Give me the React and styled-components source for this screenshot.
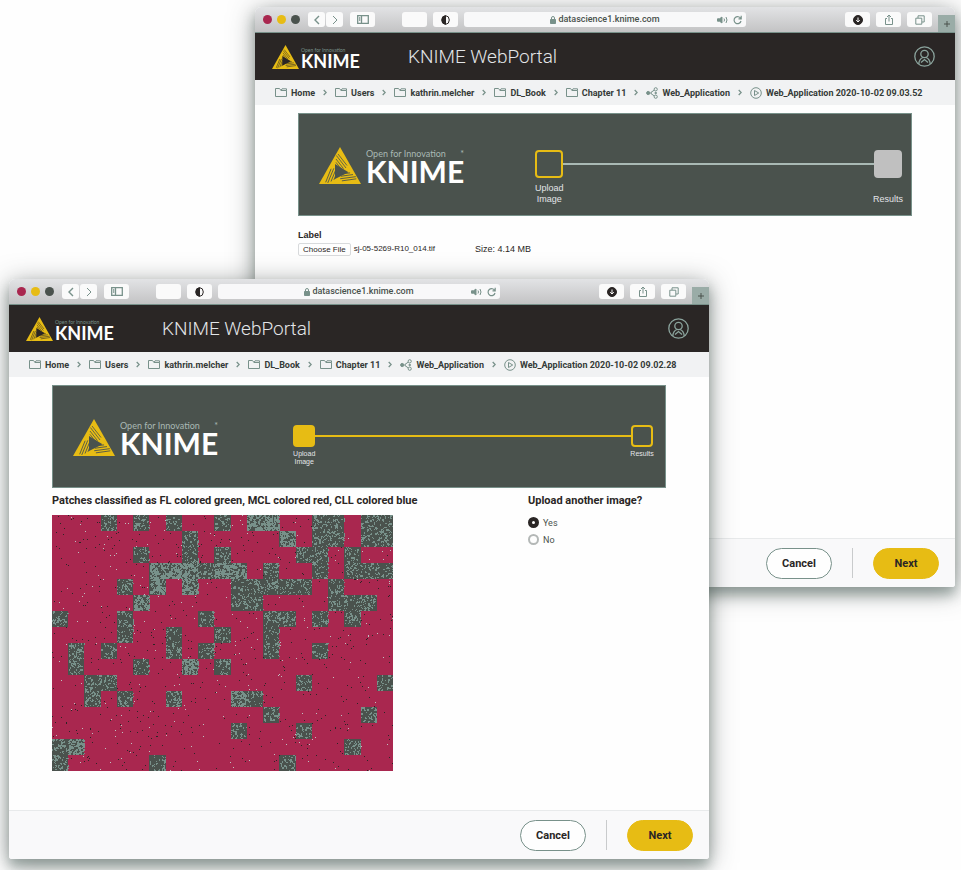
import React from "react";
import styled, { createGlobalStyle } from "styled-components";

const color = {
  ink: "#2a2625",
  slate: "#4a524d",
  sage: "#78918a",
  yellow: "#e7bc14",
  crimson: "#a9274f",
  grey: "#c0c0c0",
  mist: "#e3e5e8",
};

const GlobalStyle = createGlobalStyle`
  *, *::before, *::after { box-sizing: border-box; }
  body {
    margin: 0;
    background: #fefefe;
    color: ${color.ink};
    font-family: Roboto, "Liberation Sans", sans-serif;
  }
  button, input { font: inherit; color: inherit; margin: 0; }
  svg { display: block; flex: none; }
`;

const Desktop = styled.main`
  position: relative;
  min-height: 100vh;
  overflow: hidden;
`;

const Window = styled.section`
  position: absolute;
  top: ${(p) => (p.$front ? "279px" : "7px")};
  left: ${(p) => (p.$front ? "9px" : "255px")};
  right: ${(p) => (p.$front ? "252px" : "6px")};
  min-height: 580px;
  display: flex;
  flex-direction: column;
  background: #fefefe;
  border-radius: 6px 6px 3px 3px;
  box-shadow: 0 8px 12px rgba(74, 100, 92, 0.4), 0 4px 26px rgba(60, 66, 64, 0.5);
`;

/* Browser chrome */
const Toolbar = styled.div`
  display: flex;
  align-items: center;
  height: 26px;
  padding-left: 8px;
  border-radius: 6px 6px 0 0;
  border-bottom: 1px solid ${color.sage};
  background: linear-gradient(#e2e3e5, #c3c3c4);
  color: ${color.sage};
`;

const Lights = styled.div`
  display: flex;
  gap: 5px;
  margin-right: 8px;
`;

const Light = styled.span`
  width: 9px;
  height: 9px;
  border-radius: 50%;
  background: ${(p) => p.$tone};
`;

const ToolButton = styled.button`
  display: grid;
  place-items: center;
  width: ${(p) => (p.$narrow ? "17px" : "25px")};
  height: 15px;
  padding: 0;
  border: 0;
  border-radius: 3px;
  background: #fafafa;
  color: ${(p) => (p.$dark ? color.ink : color.sage)};
`;

const NavPair = styled.div`
  display: flex;
  gap: 1px;
  margin-right: 7px;
`;

const ToolGroup = styled.div`
  display: flex;
  gap: 6px;
  margin-left: ${(p) => (p.$end ? "99px" : "27px")};
  margin-right: 6px;
`;

const Address = styled.div`
  flex: 1;
  display: grid;
  grid-template-columns: 1fr auto 1fr;
  align-items: center;
  height: 15px;
  padding: 0 4px;
  border-radius: 3px;
  background: #f8f8f9;
  color: ${color.slate};
  font-size: 9px;
  font-weight: 500;
  line-height: 15px;
`;

const AddressText = styled.span`
  grid-column: 2;
  display: flex;
  align-items: center;
  gap: 2px;
  svg { color: ${color.sage}; }
`;

const AddressTools = styled.span`
  justify-self: end;
  display: flex;
  align-items: center;
  gap: 4px;
  color: ${color.sage};
`;

const NewTab = styled.button`
  align-self: flex-end;
  display: grid;
  place-items: center;
  width: 17px;
  height: 17px;
  padding: 0;
  border: 0;
  background: #9aaca7;
  color: ${color.slate};
`;

/* Portal header */
const Header = styled.header`
  display: flex;
  align-items: center;
  height: 47px;
  padding: 0 20px 0 17px;
  background: ${color.ink};
`;

const Brand = styled.div`
  display: flex;
  align-items: flex-end;
  gap: ${(p) => (p.$large ? "5px" : "2px")};
`;

const BrandWords = styled.div`
  display: flex;
  flex-direction: column;
  font-family: Lato, sans-serif;
`;

const Tagline = styled.span`
  display: flex;
  justify-content: space-between;
  color: ${(p) => (p.$large ? "#a9b9b4" : color.sage)};
  font-size: ${(p) => (p.$large ? "9px" : "5px")};
  line-height: ${(p) => (p.$large ? "9px" : "6px")};
`;

const BrandName = styled.span`
  color: #fefefe;
  font-size: ${(p) => (p.$large ? "30px" : "18px")};
  font-weight: 700;
  line-height: ${(p) => (p.$large ? "26px" : "16px")};
`;

const PortalTitle = styled.h1`
  flex: 1;
  margin: 0 0 0 48px;
  color: ${color.mist};
  font-size: 19px;
  font-weight: 300;
  line-height: 24px;
`;

const UserButton = styled.button`
  padding: 0;
  border: 0;
  background: none;
  color: #8ba49d;
`;

/* Breadcrumb */
const Crumbs = styled.nav`
  display: flex;
  align-items: center;
  gap: 8px;
  height: 25px;
  padding-left: 20px;
  background: #f1f2f3;
  color: ${color.sage};
  white-space: nowrap;
`;

const Crumb = styled.a`
  display: flex;
  align-items: center;
  gap: 4px;
  color: ${color.sage};
  font-size: 9px;
  font-weight: 700;
  line-height: 12px;
  text-decoration: none;
  span { color: #353b38; }
`;

/* Page body */
const Content = styled.div`
  flex: 1;
  padding: 8px 43px 16px;
`;

const Banner = styled.div`
  display: flex;
  align-items: flex-start;
  height: 103px;
  padding: 33px ${(p) => (p.$compact ? "12px" : "9px")} 0 20px;
  border: 1px solid ${color.sage};
  background: ${color.slate};
`;

const Stepper = styled.div`
  flex: 1;
  display: grid;
  grid-template-columns: ${(p) => (p.$compact ? "22px 1fr 22px" : "28px 1fr 28px")};
  margin-top: ${(p) => (p.$compact ? "6px" : "3px")};
  margin-left: ${(p) => (p.$compact ? "75px" : "71px")};
  row-gap: ${(p) => (p.$compact ? "3px" : "5px")};
  color: ${color.mist};
  font-family: "Liberation Sans", Arial, sans-serif;
  font-size: ${(p) => (p.$compact ? "7px" : "9px")};
  line-height: ${(p) => (p.$compact ? "8px" : "11px")};
`;

const StepMarker = styled.span`
  aspect-ratio: 1;
  border-radius: 4px;
  border: 2px solid ${(p) => (p.$state === "idle" ? color.grey : color.yellow)};
  background: ${(p) => ({ open: "transparent", done: color.yellow, idle: color.grey })[p.$state]};
`;

const StepLine = styled.span`
  align-self: center;
  height: 2px;
  background: ${(p) => (p.$done ? color.yellow : "#a9b9b4")};
`;

const StepLabel = styled.span`
  grid-column: ${(p) => p.$column};
  justify-self: center;
  align-self: ${(p) => (p.$low ? "end" : "start")};
  text-align: center;
  white-space: pre;
`;

const UploadForm = styled.div`
  display: grid;
  grid-template-columns: 177px 1fr;
  align-items: center;
  margin-top: 12px;
  font-family: "Liberation Sans", Arial, sans-serif;
  font-size: 9px;
  line-height: 14px;
`;

const FieldLabel = styled.label`
  grid-column: 1 / -1;
  font-weight: 700;
`;

const FileRow = styled.div`
  display: flex;
  align-items: center;
  gap: 3px;
  font-size: 8px;
`;

const ChooseFile = styled.button`
  padding: 0 4px;
  border: 1px solid #d8dadc;
  border-radius: 2px;
  background: #fefefe;
  line-height: 11px;
`;

const ResultGrid = styled.div`
  display: grid;
  grid-template-columns: minmax(0, 476px) 1fr;
  margin-top: 6px;
`;

const SectionTitle = styled.h2`
  margin: 0 0 7px;
  font-size: 11px;
  font-weight: 700;
  line-height: 14px;
`;

const Question = styled.fieldset`
  min-width: 0;
  margin: 0;
  padding: 0;
  border: 0;
`;

const Legend = styled.legend`
  padding: 0;
  margin-bottom: 6px;
  font-size: 11px;
  font-weight: 700;
  line-height: 14px;
`;

const Choice = styled.label`
  display: flex;
  align-items: center;
  gap: 4px;
  height: 17px;
  color: ${color.slate};
  font-size: 9px;
`;

const Radio = styled.input`
  appearance: none;
  width: 11px;
  height: 11px;
  border: 2px solid #b4b8b7;
  border-radius: 50%;
  background: #fefefe;
  &:checked { border: 4px solid ${color.ink}; }
`;

const Footer = styled.footer`
  display: flex;
  justify-content: flex-end;
  align-items: center;
  gap: 20px;
  height: 49px;
  padding-right: 16px;
  border-top: 1px solid #e8eaeb;
  border-radius: 0 0 3px 3px;
  background: #f9f9fa;
`;

const Divider = styled.span`
  width: 1px;
  height: 30px;
  background: #c9cbcc;
`;

const Pill = styled.button`
  width: 66px;
  height: 31px;
  padding: 0;
  border: 1px solid ${(p) => (p.$primary ? color.yellow : color.sage)};
  border-radius: 16px;
  background: ${(p) => (p.$primary ? color.yellow : "#fefefe")};
  font-size: 11px;
  font-weight: 700;
`;

/* Drawings */
const Icon = ({ w = 12, h = 12, children, sw = 1 }) => (
  <svg width={w} height={h} viewBox={`0 0 ${w} ${h}`} fill="none" stroke="currentColor" strokeWidth={sw} aria-hidden="true">
    {children}
  </svg>
);

const FolderIcon = () => (
  <Icon h={11}><path d="M.5 9.5v-8h4l1.5 2h5.5v6zM6 3.5 7 1.8h4.5v1.7" /></Icon>
);
const ShareNodesIcon = () => (
  <Icon>
    <circle cx="2.2" cy="6" r="1.6" fill="currentColor" />
    <path d="M4 6h2M5 5.4 8.4 3M5 6.6 8.4 9" />
    <circle cx="9.7" cy="2.3" r="1.6" />
    <circle cx="9.7" cy="6" r=".8" fill="currentColor" />
    <circle cx="9.7" cy="9.7" r="1.6" />
  </Icon>
);
const PlayIcon = () => (
  <Icon><circle cx="6" cy="6" r="5.3" /><path d="M4.5 3.5v5L8.7 6z" /></Icon>
);
const Chevron = () => (
  <Icon w={4} h={7} sw={1.3}><path d="M.7 1 3.2 3.5.7 6" /></Icon>
);
const UserIcon = () => (
  <Icon w={21} h={21} sw={1.3}>
    <circle cx="10.5" cy="10.5" r="9.7" />
    <circle cx="10.5" cy="8" r="3.7" />
    <path d="M4.8 18c.2-3.5 1.8-5.6 4.2-6.5M16.2 18c-.2-3.5-1.8-5.6-4.2-6.5M7 16.5l3.5-3 3.5 3" />
  </Icon>
);

const fan = "M17.4 8.500 27 21M17 12l7.500 9.700M17 15.400l5 6.500M19 7l9 11.500";
const Triangle = ({ width, height, ground }) => (
  <svg width={width} height={height} viewBox="0 0 42 37" aria-hidden="true">
    <path d="M21 0 42 37H0z" fill={color.yellow} />
    <path d="M16 17v15l13.500-6.800z" fill={ground} />
    <g stroke={ground} strokeWidth=".8">
      <path d={fan} />
      <path d={fan} transform="rotate(120 21 24.7)" />
      <path d={fan} transform="rotate(240 21 24.7)" />
    </g>
  </svg>
);

const Logo = ({ large }) => (
  <Brand $large={large}>
    <Triangle width={large ? 42 : 27} height={large ? 37 : 24} ground={large ? color.slate : color.ink} />
    <BrandWords>
      <Tagline $large={large}>
        <span>Open for Innovation</span>
        {large && <span>*</span>}
      </Tagline>
      <BrandName $large={large}>KNIME</BrandName>
    </BrandWords>
  </Brand>
);

/* Patch classification map: columns of the grey patches in each row */
const patchRows = [
  [3, 5, 7, 10, 12, 13, 16, 17, 19, 20],
  [8, 14, 16, 17, 19, 20],
  [5, 8, 10, 15, 16, 18],
  [6, 7, 8, 9, 10, 11, 13, 16, 18, 19, 20],
  [4, 6, 8, 11, 12, 13, 14, 15, 17],
  [5, 11, 12, 17, 18, 19],
  [0, 4, 9, 13, 14, 16, 18],
  [4, 7, 10, 13],
  [1, 3, 7, 9, 13, 16],
  [1, 5, 8, 10],
  [2, 3, 15, 20],
  [2, 4, 7, 11, 12],
  [13, 19],
  [11, 15],
  [0, 1, 18],
  [0, 6, 14],
];
/* Patches with a paler tissue texture, as "row-column" */
const palePatches = new Set(["0-12", "0-13", "1-14", "3-6", "3-7", "3-8", "3-10", "3-11", "4-6", "4-8", "5-5", "9-8", "11-11", "14-1"]);
const MAP_W = 341;
const MAP_H = 256;

const hash = (x, y) => {
  let n = Math.imul(x, 374761393) + Math.imul(y, 668265263);
  n = Math.imul(n ^ (n >>> 13), 1274126177);
  return ((n ^ (n >>> 16)) >>> 0) / 4294967296;
};
const blotch = (x, y) =>
  (hash(x >> 1, y >> 1) + hash((x + 1) >> 1, (y + 700) >> 1) + hash(x + 50, y)) / 3;

const buildMap = () => {
  const out = { patch: "", light: "", dark: "", white: "" };
  const edge = (c) => Math.round((c * MAP_W) / 21);
  patchRows.forEach((cols, r) => cols.forEach((c) => {
    out.patch += `M${edge(c)} ${r * 16}h${edge(c + 1) - edge(c)}v16H${edge(c)}z`;
  }));
  for (let y = 0; y < MAP_H; y++) {
    for (let x = 0; x < MAP_W; x++) {
      const c = Math.min(20, Math.floor((x * 21) / MAP_W));
      const r = y >> 4;
      const px = `M${x} ${y}h1v1h-1z`;
      if (patchRows[r].includes(c)) {
        const limit = palePatches.has(`${r}-${c}`) ? 0.46 : 0.62;
        if (blotch(x, y) > limit) out.light += px;
      } else {
        const v = hash(x + 900, y + 400);
        if (v < 0.008) out.dark += px;
        else if (v > 0.997) out.white += px;
      }
    }
  }
  return out;
};
const map = buildMap();

const PatchMap = () => (
  <svg width={MAP_W} height={MAP_H} viewBox={`0 0 ${MAP_W} ${MAP_H}`} shapeRendering="crispEdges" role="img" aria-label="Classified patches">
    <path d={`M0 0h${MAP_W}v${MAP_H}H0z`} fill={color.crimson} />
    <path d={map.patch} fill={color.slate} />
    <path d={map.light} fill={color.sage} />
    <path d={map.dark} fill={color.ink} />
    <path d={map.white} fill={color.grey} />
  </svg>
);

const BrowserBar = () => (
  <Toolbar>
    <Lights>
      <Light $tone={color.crimson} /><Light $tone={color.yellow} /><Light $tone={color.slate} />
    </Lights>
    <NavPair>
      <ToolButton $narrow aria-label="Back"><Icon w={6} h={10} sw={1.4}><path d="M5 1 1 5l4 4" /></Icon></ToolButton>
      <ToolButton $narrow aria-label="Forward"><Icon w={6} h={10}><path d="m1 1 4 4-4 4" /></Icon></ToolButton>
    </NavPair>
    <ToolButton aria-label="Sidebar">
      <Icon w={12} h={9} sw={1.3}><path d="M.7.7h10.6v7.6H.7zM4.5.7v7.6M2 3h1.3M2 5h1.3" /></Icon>
    </ToolButton>
    <ToolGroup>
      <ToolButton aria-label="Extension" />
      <ToolButton $dark aria-label="Privacy report">
        <Icon w={9} h={10}>
          <path d="M4.5.6Q8.3 1 8.3 5T4.5 9.400" />
          <path d="M4.5.6v8.800Q.7 9 .7 5T4.5.6z" fill="currentColor" />
        </Icon>
      </ToolButton>
    </ToolGroup>
    <Address>
      <AddressText>
        <Icon w={6} h={8}><path d="M.5 3.5h5v4h-5z" fill="currentColor" /><path d="M1.5 3.5V2a1.5 1.5 0 0 1 3 0v1.5" /></Icon>
        datascience1.knime.com
      </AddressText>
      <AddressTools>
        <Icon w={12} h={8}><path d="M.5 2.8h2L5 1v6L2.5 5.2h-2z" fill="currentColor" /><path d="M7 2.5q1 1.5 0 3M9 1q2 3 0 6" /></Icon>
        <Icon w={9} h={10} sw={1.2}><path d="M7.8 3.8A3.5 3.5 0 1 0 8 6M8.2.8v3H5.5" /></Icon>
      </AddressTools>
    </Address>
    <ToolGroup $end>
      <ToolButton $dark aria-label="Downloads">
        <Icon w={10} h={10}><circle cx="5" cy="5" r="4.5" fill="currentColor" /><path d="M5 2.5V7M3.2 5.2 5 7l1.8-1.8" stroke="#fefefe" /></Icon>
      </ToolButton>
      <ToolButton aria-label="Share">
        <Icon w={10} h={12}><path d="M3 4.5H1.5v6h7v-6H7M5 7.5V1M3 3l2-2 2 2" /></Icon>
      </ToolButton>
      <ToolButton aria-label="Tabs">
        <Icon w={10} h={10}><path d="M.8 3.2h6v6h-6zM3 3V.8h6.2V7H7" /></Icon>
      </ToolButton>
    </ToolGroup>
    <NewTab aria-label="New tab"><Icon w={8} h={8}><path d="M4 1v6M1 4h6" /></Icon></NewTab>
  </Toolbar>
);

const folders = ["Home", "Users", "kathrin.melcher", "DL_Book", "Chapter 11"];

const PortalWindow = ({ front, job, children }) => (
  <Window $front={front}>
    <BrowserBar />
    <Header>
      <Logo />
      <PortalTitle>KNIME WebPortal</PortalTitle>
      <UserButton aria-label="Account"><UserIcon /></UserButton>
    </Header>
    <Crumbs aria-label="Breadcrumb">
      {folders.map((name) => (
        <React.Fragment key={name}>
          <Crumb href="#"><FolderIcon /><span>{name}</span></Crumb>
          <Chevron />
        </React.Fragment>
      ))}
      <Crumb href="#"><ShareNodesIcon /><span>Web_Application</span></Crumb>
      <Chevron />
      <Crumb href="#"><PlayIcon /><span>{job}</span></Crumb>
    </Crumbs>
    <Content>{children}</Content>
    <Footer>
      <Pill>Cancel</Pill>
      <Divider />
      <Pill $primary>Next</Pill>
    </Footer>
  </Window>
);

const StepBanner = ({ compact, first, last }) => (
  <Banner $compact={compact}>
    <Logo large />
    <Stepper $compact={compact}>
      <StepMarker $state={first} />
      <StepLine $done={compact} />
      <StepMarker $state={last} />
      <StepLabel $column={1}>{"Upload\nImage"}</StepLabel>
      <StepLabel $column={3} $low={!compact}>Results</StepLabel>
    </Stepper>
  </Banner>
);

export default function App() {
  return (
    <Desktop>
      <GlobalStyle />
      <PortalWindow job="Web_Application 2020-10-02 09.03.52">
        <StepBanner first="open" last="idle" />
        <UploadForm>
          <FieldLabel htmlFor="choose-file">Label</FieldLabel>
          <FileRow>
            <ChooseFile id="choose-file" type="button">Choose File</ChooseFile>
            <span>sj-05-5269-R10_014.tif</span>
          </FileRow>
          <span>Size: 4.14 MB</span>
        </UploadForm>
      </PortalWindow>
      <PortalWindow front job="Web_Application 2020-10-02 09.02.28">
        <StepBanner compact first="done" last="open" />
        <ResultGrid>
          <div>
            <SectionTitle>Patches classified as FL colored green, MCL colored red, CLL colored blue</SectionTitle>
            <PatchMap />
          </div>
          <Question>
            <Legend>Upload another image?</Legend>
            <Choice><Radio type="radio" name="again" defaultChecked />Yes</Choice>
            <Choice><Radio type="radio" name="again" />No</Choice>
          </Question>
        </ResultGrid>
      </PortalWindow>
    </Desktop>
  );
}
